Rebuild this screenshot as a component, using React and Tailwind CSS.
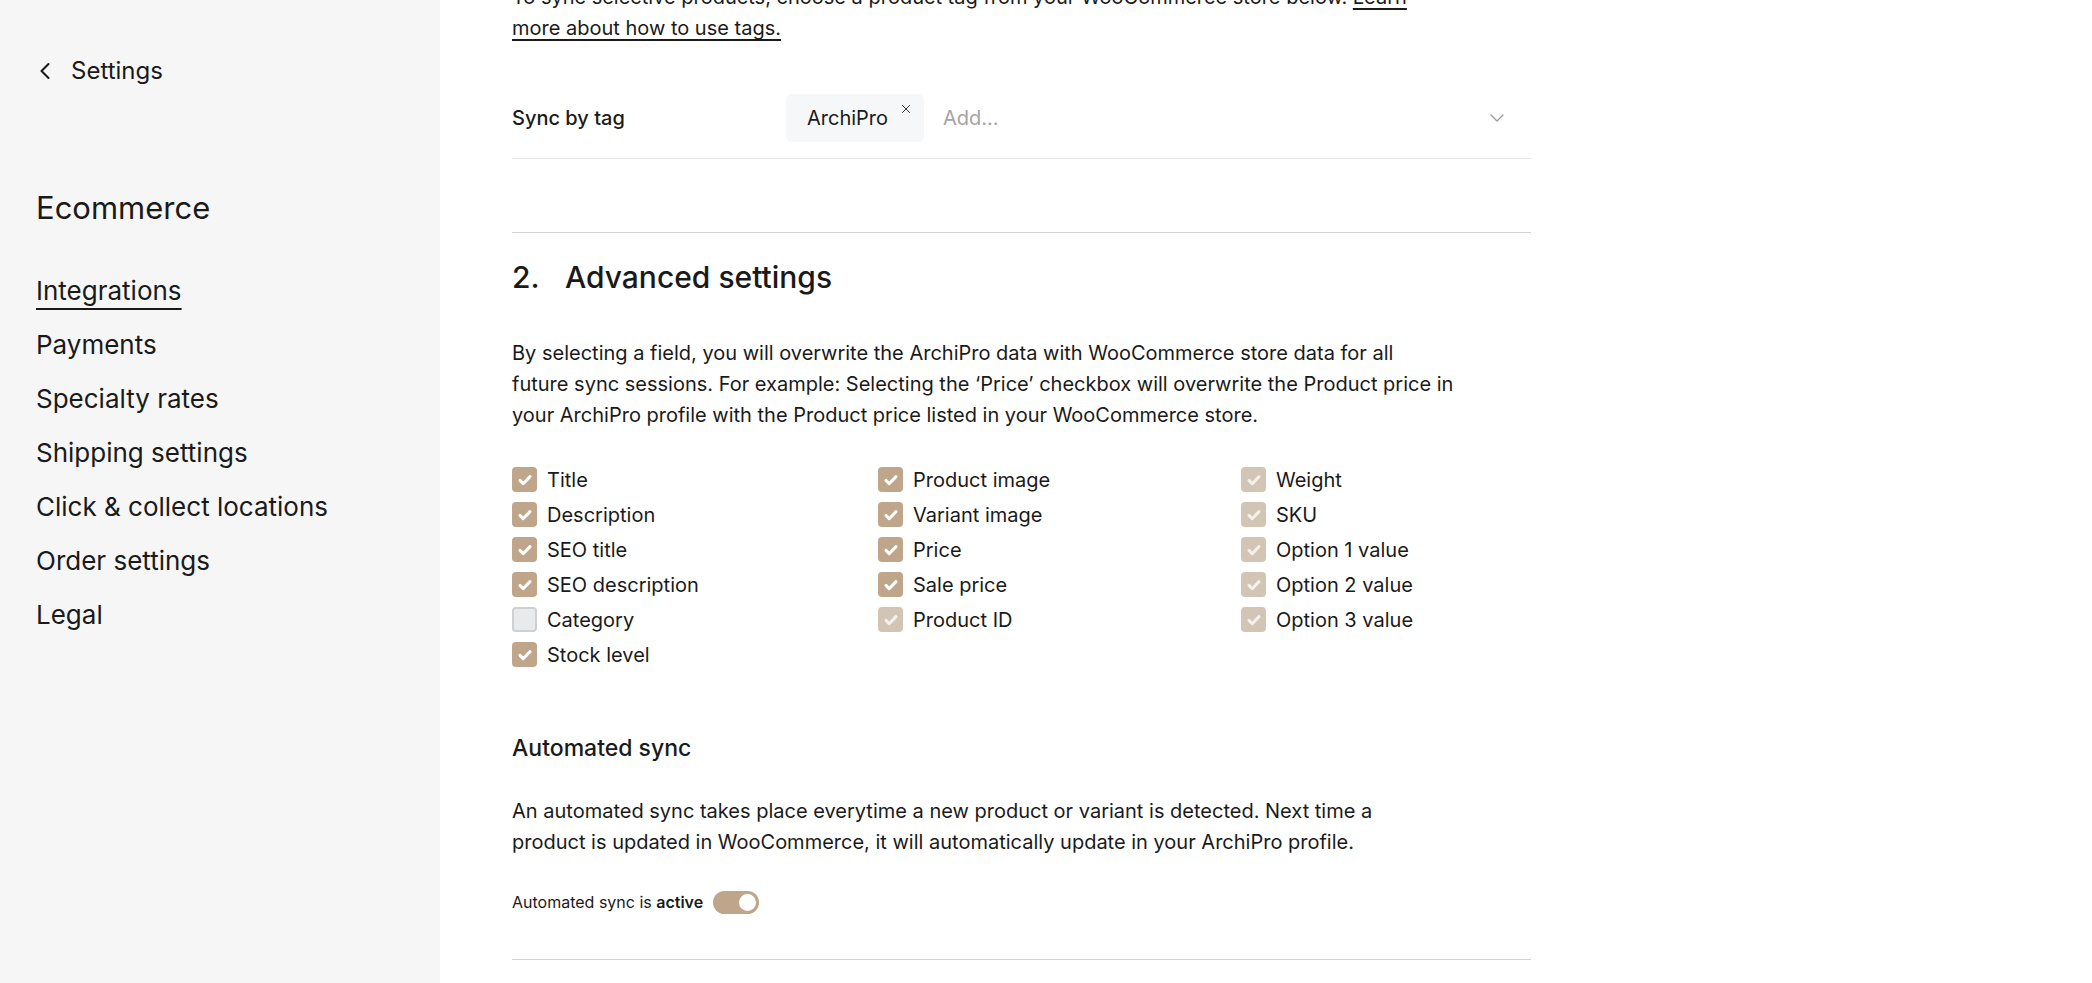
import { ChevronLeft, ChevronDown, X } from 'lucide-react'

const menu = [
  'Integrations',
  'Payments',
  'Specialty rates',
  'Shipping settings',
  'Click & collect locations',
  'Order settings',
  'Legal',
]

const fields = [
  [
    { label: 'Title', state: 'on' },
    { label: 'Description', state: 'on' },
    { label: 'SEO title', state: 'on' },
    { label: 'SEO description', state: 'on' },
    { label: 'Category', state: 'off' },
    { label: 'Stock level', state: 'on' },
  ],
  [
    { label: 'Product image', state: 'on' },
    { label: 'Variant image', state: 'on' },
    { label: 'Price', state: 'on' },
    { label: 'Sale price', state: 'on' },
    { label: 'Product ID', state: 'locked' },
  ],
  [
    { label: 'Weight', state: 'locked' },
    { label: 'SKU', state: 'locked' },
    { label: 'Option 1 value', state: 'locked' },
    { label: 'Option 2 value', state: 'locked' },
    { label: 'Option 3 value', state: 'locked' },
  ],
]

function Check({ state }) {
  if (state === 'off') {
    return <span className="h-[25px] w-[25px] shrink-0 rounded-[4px] border-2 border-[#cfd0d2] bg-[#e9eaec]" />
  }
  const bg = state === 'on' ? 'bg-[#bfa68a]' : 'bg-[#d3c5b5]'
  return (
    <span className={`flex h-[25px] w-[25px] shrink-0 items-center justify-center rounded-[4px] ${bg}`}>
      <svg width="16" height="16" viewBox="0 0 16 16" fill="none">
        <path d="M3 8.4l3.2 3.3L13 4.6" stroke={state === 'on' ? '#fff' : '#f4f0ec'} strokeWidth="3" strokeLinecap="round" strokeLinejoin="round" />
      </svg>
    </span>
  )
}

export default function App() {
  return (
    <div className="flex h-screen overflow-hidden bg-white text-[#1a1a1a]" style={{ fontFamily: 'Inter, "Liberation Sans", sans-serif' }}>
      <aside className="w-[440px] shrink-0 bg-[#f6f6f6] pl-9">
        <div className="mt-[56px] flex h-[30px] items-center gap-[12px] text-[24px]">
          <ChevronLeft className="-ml-[5px] h-[28px] w-[28px]" strokeWidth={1.8} />
          <span>Settings</span>
        </div>
        <h1 className="mt-[102px] text-[31px] leading-[40px]">Ecommerce</h1>
        <nav className="mt-[48px] flex flex-col">
          {menu.map((m, i) => (
            <a
              key={m}
              className={`h-[54px] text-[26px] leading-[30px] ${i === 0 ? 'underline decoration-2 underline-offset-[8px]' : ''}`}
            >
              {m}
            </a>
          ))}
        </nav>
      </aside>

      <main className="w-[1091px] pl-[72px]">
        <p className="mt-[-18px] text-[20px] leading-[31px]">
          To sync selective products, choose a product tag from your WooCommerce store below.{' '}
          <a className="underline underline-offset-4">Learn</a>
          <br />
          <a className="underline underline-offset-4">more about how to use tags.</a>
        </p>

        <div className="mt-[50px] flex items-center border-b border-[#e6e6e6] pb-[16px]">
          <div className="w-[274px] text-[20px] font-medium">Sync by tag</div>
          <div className="relative flex h-[48px] w-[138px] items-center rounded-[6px] bg-[#f6f7f9] pl-[21px] text-[20px]">
            ArchiPro
            <X className="absolute right-[11px] top-[8px] h-[14px] w-[14px]" strokeWidth={1.5} />
          </div>
          <span className="ml-[19px] text-[20px] text-[#a3a3a3]">Add...</span>
          <ChevronDown className="ml-auto mr-[22px] h-[24px] w-[24px] text-[#9a9a9a]" strokeWidth={1.3} />
        </div>

        <div className="mt-[73px] border-t border-[#d2d2d2] pt-[24px]">
          <h2 className="flex text-[30px] font-medium leading-[40px]">
            <span className="w-[53px]">2.</span>
            <span>Advanced settings</span>
          </h2>

          <p className="mt-[41px] text-[20px] leading-[31px]">
            By selecting a field, you will overwrite the ArchiPro data with WooCommerce store data for all
            <br />
            future sync sessions. For example: Selecting the ‘Price’ checkbox will overwrite the Product price in
            <br />
            your ArchiPro profile with the Product price listed in your WooCommerce store.
          </p>

          <div className="mt-[31px] grid grid-cols-[366px_363px_1fr]">
            {fields.map((col, ci) => (
              <div key={ci} className="flex flex-col">
                {col.map((f) => (
                  <label key={f.label} className="flex h-[35px] items-center gap-[10px] text-[20px]">
                    <Check state={f.state} />
                    <span>{f.label}</span>
                  </label>
                ))}
              </div>
            ))}
          </div>

          <h3 className="mt-[60px] text-[23px] font-medium leading-[32px]">Automated sync</h3>
          <p className="mt-[32px] text-[20px] leading-[31px]">
            An automated sync takes place everytime a new product or variant is detected. Next time a
            <br />
            product is updated in WooCommerce, it will automatically update in your ArchiPro profile.
          </p>

          <div className="mt-[32px] flex items-center gap-[10px] border-b border-[#d2d2d2] pb-[45px]">
            <span className="text-[16px]">
              Automated sync is <b className="font-semibold">active</b>
            </span>
            <span className="flex h-[23px] w-[46px] items-center justify-end rounded-full bg-[#bfa68a] pr-[1px]">
              <span className="h-[21px] w-[21px] rounded-full border-2 border-[#bfa68a] bg-white" />
            </span>
          </div>
        </div>
      </main>
    </div>
  )
}
